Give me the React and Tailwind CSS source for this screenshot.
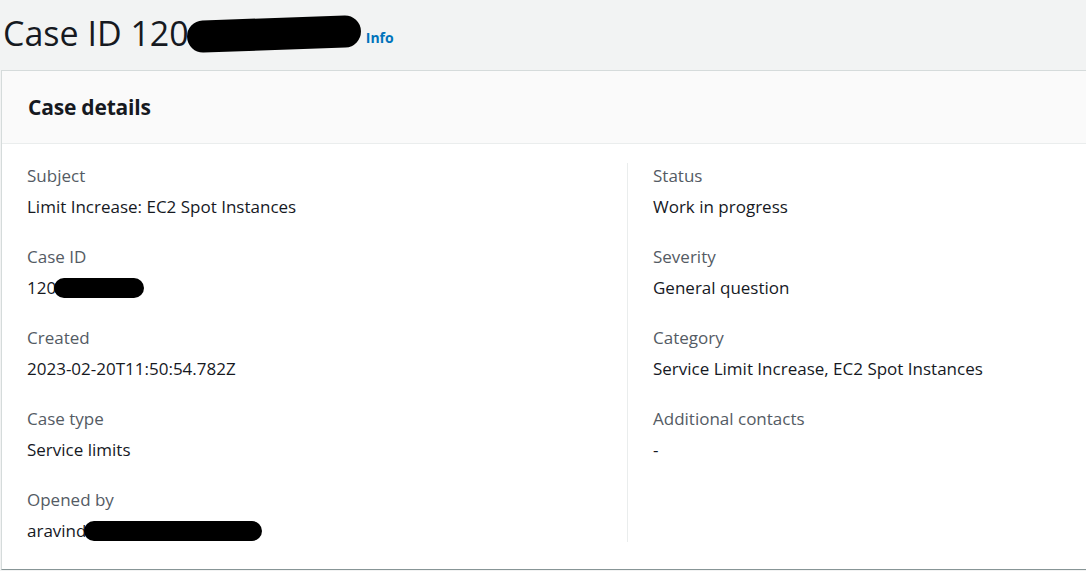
export default function App() {
  const left = [
    { label: "Subject", value: "Limit Increase: EC2 Spot Instances" },
    { label: "Case ID", value: "120", blot: "w-[90px]" },
    { label: "Created", value: "2023-02-20T11:50:54.782Z" },
    { label: "Case type", value: "Service limits" },
    { label: "Opened by", value: "aravind", blot: "w-[178px]" },
  ];
  const right = [
    { label: "Status", value: "Work in progress" },
    { label: "Severity", value: "General question" },
    { label: "Category", value: "Service Limit Increase, EC2 Spot Instances" },
    { label: "Additional contacts", value: "-" },
  ];

  const Field = ({ item }) => (
    <div className="flex flex-col gap-[9px]">
      <div className="text-[17px] leading-[22px] text-[#545b64]">{item.label}</div>
      <div className="flex items-center text-[17px] leading-[22px] text-[#16191f]">
        <span>{item.value}</span>
        {item.blot && (
          <span className={`${item.blot} h-[20px] -ml-[2px] rounded-full bg-black`} />
        )}
      </div>
    </div>
  );

  return (
    <div
      className="min-h-screen w-[1086px] h-[571px] overflow-hidden bg-[#f2f3f3]"
      style={{ fontFamily: '"Open Sans", "Noto Sans", sans-serif' }}
    >
      {/* page title */}
      <div className="h-[70px] flex items-center pl-[3px] pb-[5px]">
        <h1 className="flex items-end text-[34px] leading-[40px] text-[#16191f]">
          <span>Case ID 120</span>
          <span className="w-[174px] h-[32px] mb-[3px] -ml-[2px] rounded-full bg-black -rotate-[2deg]" />
          <a className="ml-[5px] mb-[5px] text-[14px] leading-[20px] font-bold text-[#0073bb]">Info</a>
        </h1>
      </div>

      {/* card */}
      <div className="ml-[1px] bg-white border-l border-t border-b border-[#d5dbdb] border-b-[#879596]">
        <div className="h-[73px] flex items-center pl-[26px] pt-[1px] bg-[#fafafa] border-b border-[#eaeded]">
          <h2 className="text-[21px] font-bold text-[#16191f] tracking-[-0.2px]">Case details</h2>
        </div>
        <div className="grid grid-cols-[625px_1fr] pt-[19px] pb-[27px]">
          <div className="flex flex-col gap-[28px] pl-[25px] pt-[2px]">
            {left.map((f) => (
              <Field key={f.label} item={f} />
            ))}
          </div>
          <div className="flex flex-col gap-[28px] pl-[25px] pt-[2px] border-l border-[#eaeded]">
            {right.map((f) => (
              <Field key={f.label} item={f} />
            ))}
          </div>
        </div>
      </div>
    </div>
  );
}
